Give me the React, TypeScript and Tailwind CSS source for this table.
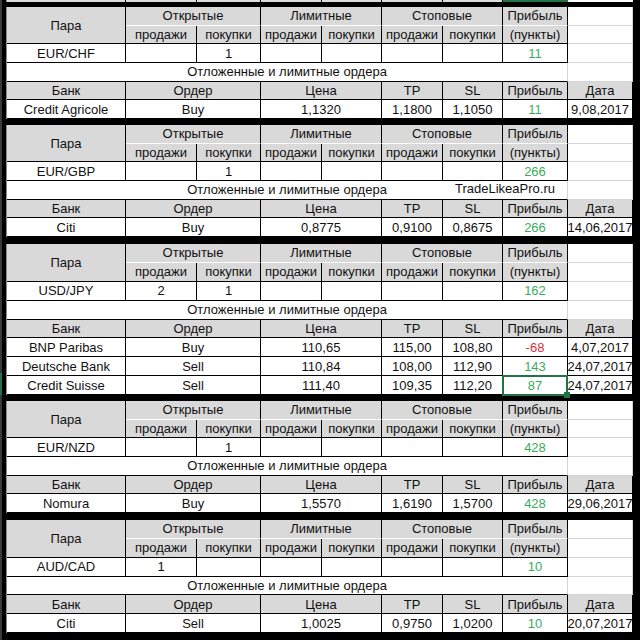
import React from "react";

type Order = {
  bank: string;
  order: string;
  price: string;
  tp: string;
  sl: string;
  profit: string;
  date: string;
  selected?: boolean;
};

type Block = {
  pair: string;
  sell: string;
  buy: string;
  profit: string;
  orders: Order[];
  size: string;
  gap: string;
  note?: boolean;
};

const blocks: Block[] = [
  {
    pair: "EUR/CHF",
    sell: "",
    buy: "1",
    profit: "11",
    size: "h-[112px] grid-rows-6",
    gap: "mt-[5px]",
    orders: [
      { bank: "Credit Agricole", order: "Buy", price: "1,1320", tp: "1,1800", sl: "1,1050", profit: "11", date: "9,08,2017" },
    ],
  },
  {
    pair: "EUR/GBP",
    sell: "",
    buy: "1",
    profit: "266",
    size: "h-[112px] grid-rows-6",
    gap: "mt-[6px]",
    note: true,
    orders: [
      { bank: "Citi", order: "Buy", price: "0,8775", tp: "0,9100", sl: "0,8675", profit: "266", date: "14,06,2017" },
    ],
  },
  {
    pair: "USD/JPY",
    sell: "2",
    buy: "1",
    profit: "162",
    size: "h-[151px] grid-rows-8",
    gap: "mt-[7px]",
    orders: [
      { bank: "BNP Paribas", order: "Buy", price: "110,65", tp: "115,00", sl: "108,80", profit: "-68", date: "4,07,2017" },
      { bank: "Deutsche Bank", order: "Sell", price: "110,84", tp: "108,00", sl: "112,90", profit: "143", date: "24,07,2017" },
      { bank: "Credit Suisse", order: "Sell", price: "111,40", tp: "109,35", sl: "112,20", profit: "87", date: "24,07,2017", selected: true },
    ],
  },
  {
    pair: "EUR/NZD",
    sell: "",
    buy: "1",
    profit: "428",
    size: "h-[112px] grid-rows-6",
    gap: "mt-[6px]",
    orders: [
      { bank: "Nomura", order: "Buy", price: "1,5570", tp: "1,6190", sl: "1,5700", profit: "428", date: "29,06,2017" },
    ],
  },
  {
    pair: "AUD/CAD",
    sell: "1",
    buy: "",
    profit: "10",
    size: "h-[113px] grid-rows-6",
    gap: "mt-[7px]",
    orders: [
      { bank: "Citi", order: "Sell", price: "1,0025", tp: "0,9750", sl: "1,0200", profit: "10", date: "20,07,2017" },
    ],
  },
];

const COLS = "grid-cols-[119px_71px_64px_61px_60px_61px_60px_65px_65px]";

const BOTTOM = {
  black: "border-b-black",
  white: "border-b-white",
  grid: "border-b-[#d4d4d4]",
};
const RIGHT = {
  black: "border-r-black",
  grid: "border-r-[#d4d4d4]",
};

function Cell({
  children,
  className = "",
  b = "black",
  r = "black",
}: {
  children?: React.ReactNode;
  className?: string;
  b?: keyof typeof BOTTOM;
  r?: keyof typeof RIGHT;
}) {
  return (
    <div className={`flex items-center justify-center whitespace-nowrap border-r border-b ${BOTTOM[b]} ${RIGHT[r]} ${className}`}>
      {children}
    </div>
  );
}

const gray = "bg-[#d9d9d9]";
const green = "text-[#3bab62]";

function Section({ d }: { d: Block }) {
  return (
    <div className={`grid ${COLS} ${d.size} ${d.gap} w-[627px] border-l border-l-[#8c8c8c] bg-white`}>
      {/* шапка */}
      <Cell className={`row-span-2 ${gray}`}>Пара</Cell>
      <Cell className={`col-span-2 ${gray}`} b="white">Открытые</Cell>
      <Cell className={`col-span-2 ${gray}`} b="white">Лимитные</Cell>
      <Cell className={`col-span-2 ${gray}`} b="white">Стоповые</Cell>
      <Cell className={gray} b="white">Прибыль</Cell>
      <Cell b="grid" r="grid" />

      <Cell className={gray}>продажи</Cell>
      <Cell className={gray}>покупки</Cell>
      <Cell className={gray}>продажи</Cell>
      <Cell className={gray}>покупки</Cell>
      <Cell className={gray}>продажи</Cell>
      <Cell className={gray}>покупки</Cell>
      <Cell className={gray}>(пункты)</Cell>
      <Cell b="grid" r="grid" />

      <Cell>{d.pair}</Cell>
      <Cell>{d.sell}</Cell>
      <Cell>{d.buy}</Cell>
      <Cell />
      <Cell />
      <Cell />
      <Cell />
      <Cell className={green}>{d.profit}</Cell>
      <Cell b="grid" r="grid" />

      <Cell className="relative col-span-8" r="grid">
        Отложенные и лимитные ордера
        {d.note && <span className="absolute left-[448px] top-[1px] text-[13px]">TradeLikeaPro.ru</span>}
      </Cell>
      <Cell b="grid" r="grid" />

      <Cell className={gray}>Банк</Cell>
      <Cell className={`col-span-2 ${gray}`}>Ордер</Cell>
      <Cell className={`col-span-2 ${gray}`}>Цена</Cell>
      <Cell className={gray}>TP</Cell>
      <Cell className={gray}>SL</Cell>
      <Cell className={gray}>Прибыль</Cell>
      <Cell className={gray}>Дата</Cell>

      {d.orders.map((o) => (
        <React.Fragment key={o.bank}>
          <Cell>{o.bank}</Cell>
          <Cell className="col-span-2">{o.order}</Cell>
          <Cell className="col-span-2">{o.price}</Cell>
          <Cell>{o.tp}</Cell>
          <Cell>{o.sl}</Cell>
          <Cell className={`relative ${o.profit.startsWith("-") ? "text-[#e62e3c]" : green}`}>
            {o.profit}
            {o.selected && (
              <>
                <span className="absolute -left-px -top-px -right-px -bottom-[2px] border-2 border-[#217346]" />
                <span className="absolute -right-[3px] -bottom-[4px] h-[6px] w-[6px] bg-[#217346]" />
              </>
            )}
          </Cell>
          <Cell>{o.date}</Cell>
        </React.Fragment>
      ))}
    </div>
  );
}

export default function App() {
  return (
    <div
      className="flex h-[640px] w-[640px] overflow-hidden bg-black text-[13px] leading-none text-[#111]"
      style={{ fontFamily: '"Liberation Sans", Arial, sans-serif' }}
    >
      {/* заголовки строк слева */}
      <div className="flex w-[2px] flex-col">
        <div className="h-[373px] bg-[#3a3a3a]" />
        <div className="h-[22px] bg-[#217346]" />
        <div className="flex-1 bg-[#3a3a3a]" />
      </div>
      <div className="w-[4px]" />

      <div className="flex w-[627px] flex-col">
        {/* хвост предыдущей строки */}
        <div className={`grid ${COLS} h-[2px] w-[627px] border-l border-l-[#8c8c8c] bg-[#dcdcdc]`}>
          <div className="border-r border-r-black" />
          <div className="border-r border-r-black" />
          <div className="border-r border-r-black" />
          <div className="border-r border-r-black" />
          <div className="border-r border-r-black" />
          <div className="border-r border-r-black" />
          <div className="border-r border-r-black" />
          <div className="bg-[#217346]" />
          <div className="bg-white" />
        </div>
        {blocks.map((d) => (
          <Section key={d.pair} d={d} />
        ))}
      </div>
    </div>
  );
}
